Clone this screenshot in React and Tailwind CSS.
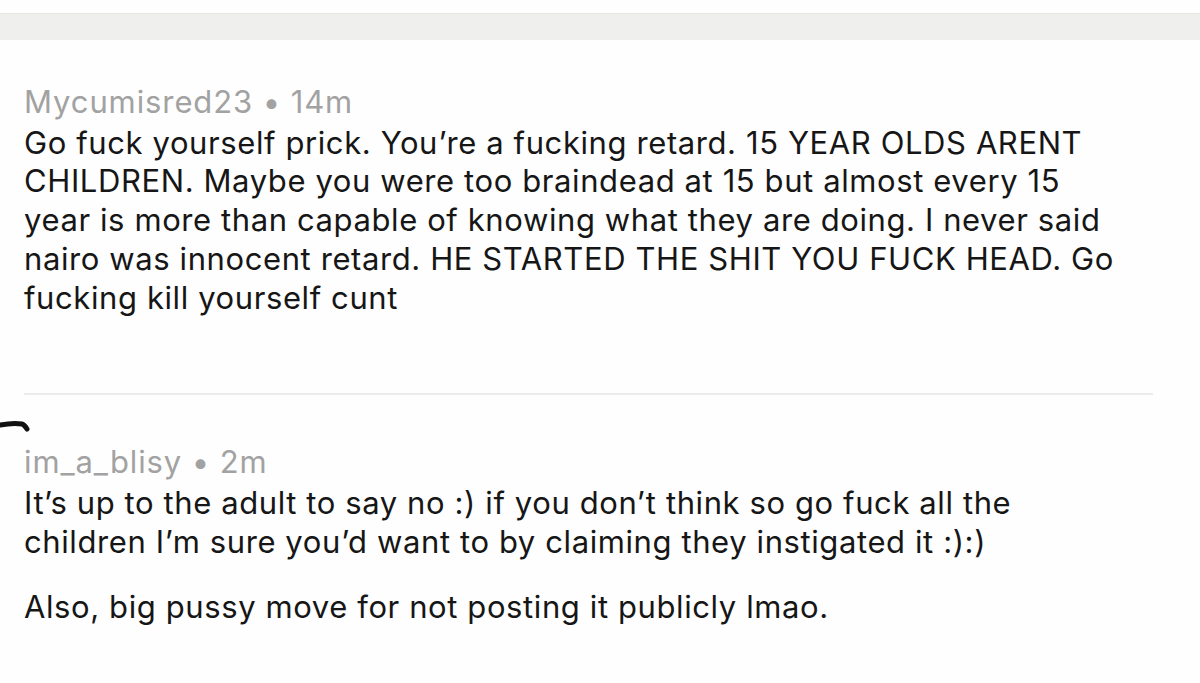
export default function App() {
  const font = { fontFamily: 'Inter, "Liberation Sans", sans-serif' };
  const body = "text-[31px] leading-[38.75px] text-[#161616] tracking-[0.6px] whitespace-nowrap";
  const meta = "text-[31px] leading-[39px] text-[#a2a2a2] tracking-[0.9px] whitespace-nowrap";
  return (
    <div className="w-[1200px] h-[683px] bg-[#fefefe] overflow-hidden relative" style={font}>
      <div className="h-[13px]" />
      <div className="h-[27px] bg-[#efefed] border-t border-[#e5e5e3]" />
      <div className="pl-[24px] pt-[41.5px]">
        <div className={meta}>Mycumisred23 • 14m</div>
        <div className="mt-[3px]">
          <div className={body}>Go fuck yourself prick. You’re a fucking retard. 15 YEAR OLDS ARENT</div>
          <div className={body}>CHILDREN. Maybe you were too braindead at 15 but almost every 15</div>
          <div className={body}>year is more than capable of knowing what they are doing. I never said</div>
          <div className={body}>nairo was innocent retard. HE STARTED THE SHIT YOU FUCK HEAD. Go</div>
          <div className={body}>fucking kill yourself cunt</div>
        </div>
      </div>
      <div className="ml-[24px] w-[1129px] h-[2px] bg-[#ececec] mt-[76px]" />
      <div className="relative pl-[24px] pt-[46.5px]">
        <svg className="absolute left-0 top-[25px]" width="30" height="18" viewBox="0 0 30 18">
          <path d="M0 5 C8 3.5 16 3 22 4 C24 4.5 25.5 6.5 27 9" stroke="#111" strokeWidth="5" fill="none" strokeLinecap="round" />
        </svg>
        <div className={meta}>im_a_blisy • 2m</div>
        <div className="mt-[3px]">
          <div className={body}>It’s up to the adult to say no :) if you don’t think so go fuck all the</div>
          <div className={body}>children I’m sure you’d want to by claiming they instigated it :):)</div>
        </div>
        <div className={body + " mt-[26.5px]"}>Also, big pussy move for not posting it publicly lmao.</div>
      </div>
    </div>
  );
}
